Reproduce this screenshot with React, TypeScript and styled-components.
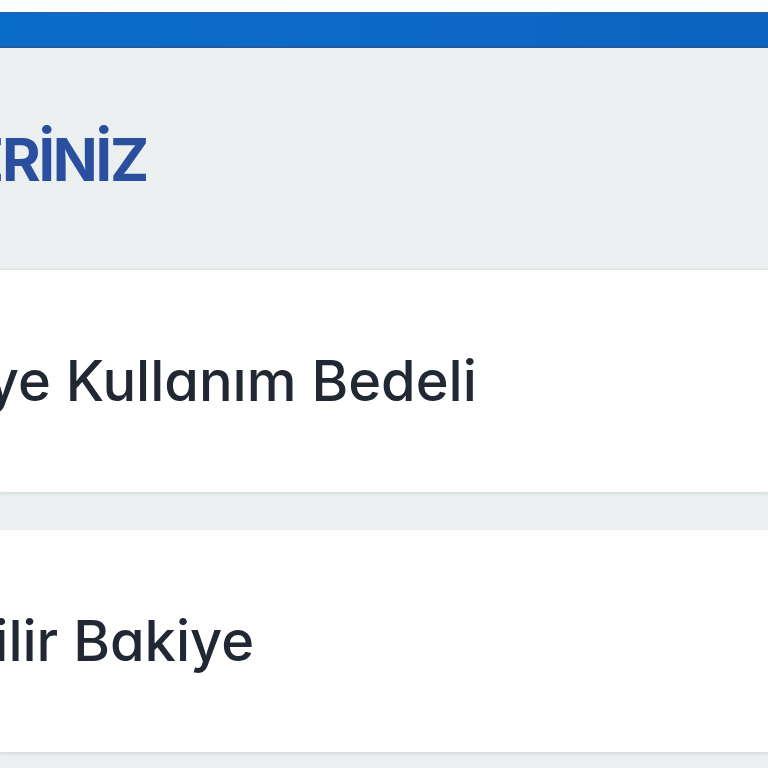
import styled, { createGlobalStyle } from "styled-components"

const GlobalStyle = createGlobalStyle`
  html, body {
    margin: 0;
    padding: 0;
    background: #ebeff0;
    overflow: hidden;
  }
  body {
    font-family: Inter, "Noto Sans", sans-serif;
    font-feature-settings: "cv11" 1;
  }
`

const Page = styled.div`
  display: flex;
  flex-direction: column;
  width: 768px;
  height: 768px;
  overflow: hidden;
`

const TopStrip = styled.div`
  height: 12px;
  background: #fbfdfe;
`

const BlueBar = styled.div`
  height: 33px;
  background: linear-gradient(90deg, #0a6cc9 0%, #0d69c8 50%, #0c63c0 100%);
  border-top: 1px solid #2b5d99;
  border-bottom: 2px solid #22599b;
  box-shadow: 0 1px 1px #dcefff;
`

const Header = styled.div`
  height: 220px;
  display: flex;
  align-items: center;
  background: #ebeff0;
  border-bottom: 2px solid #e1e6e6;
`

const Title = styled.h1`
  margin: 2px 0 0 -200px;
  white-space: nowrap;
  font-size: 59px;
  font-weight: 700;
  color: #2a4f9f;
  letter-spacing: -2.2px;
`

const List = styled.div`
  display: flex;
  flex-direction: column;
  gap: 38px;
`

const Card = styled.div`
  height: 222px;
  display: flex;
  align-items: center;
  background: #ffffff;
  box-shadow: 0 2px 3px rgba(60, 70, 80, 0.12);
`

const Label = styled.span<{ $shift: number }>`
  margin-left: ${({ $shift }) => -$shift}px;
  white-space: nowrap;
  font-size: 56px;
  font-weight: 500;
  color: #212834;
`

export default function App() {
  return (
    <>
      <GlobalStyle />
      <Page>
        <TopStrip />
        <BlueBar />
        <Header>
          <Title>BİLGİLERİNİZ</Title>
        </Header>
        <List>
          <Card>
            <Label $shift={130}>Bakiye Kullanım Bedeli</Label>
          </Card>
          <Card>
            <Label $shift={270}>Kullanılabilir Bakiye</Label>
          </Card>
        </List>
      </Page>
    </>
  )
}
